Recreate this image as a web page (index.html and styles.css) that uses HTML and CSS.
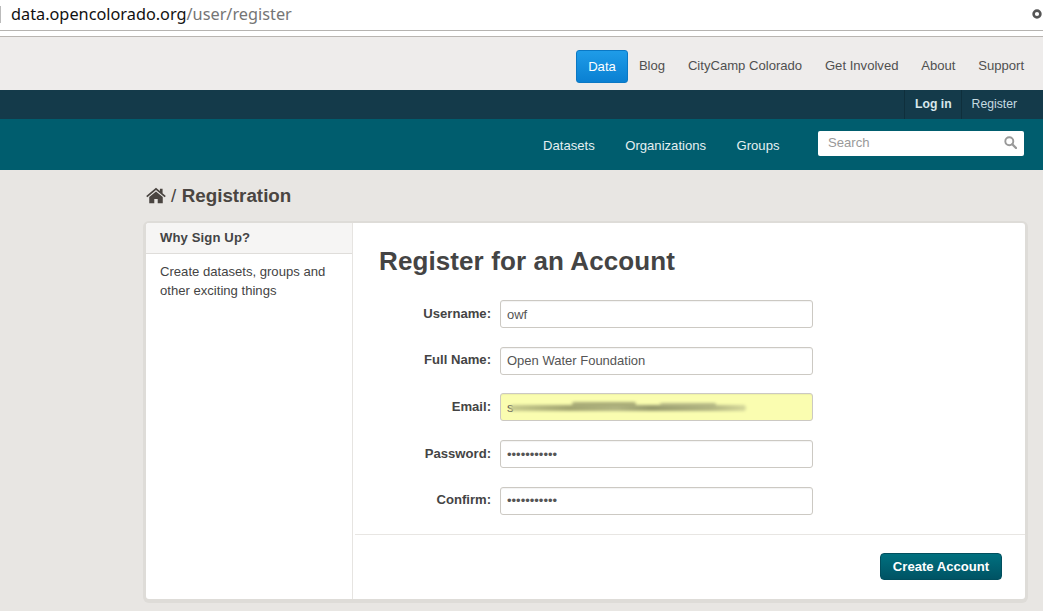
FILE: index.html
```html
<!DOCTYPE html>
<html lang="en">
<head>
<meta charset="utf-8">
<title>Registration</title>
<link rel="stylesheet" href="styles.css">
</head>
<body>
<div class="addressbar">
  <span class="url"><span class="host">data.opencolorado.org</span>/user/register</span>
  <svg class="gear" width="10" height="10" viewBox="0 0 10 10"><circle cx="5" cy="5" r="3.4" fill="none" stroke="#555" stroke-width="2.6"/></svg>
</div>
<div class="chromegap"></div>
<nav class="sitenav">
  <a class="sitelink active">Data</a>
  <a class="sitelink">Blog</a>
  <a class="sitelink">CityCamp Colorado</a>
  <a class="sitelink">Get Involved</a>
  <a class="sitelink">About</a>
  <a class="sitelink">Support</a>
</nav>
<div class="accountbar">
  <a class="acct login">Log in</a>
  <a class="acct register">Register</a>
</div>
<header class="mainnav">
  <a class="navlink">Datasets</a>
  <a class="navlink">Organizations</a>
  <a class="navlink">Groups</a>
  <div class="searchbox">
    <span class="searchtext">Search</span>
    <svg width="13" height="13" viewBox="0 0 13 13"><circle cx="5.3" cy="5.3" r="4" fill="none" stroke="#999" stroke-width="1.9"/><path d="M8.3 8.3L12 12" stroke="#999" stroke-width="2.3" stroke-linecap="round"/></svg>
  </div>
</header>
<main class="content">
  <div class="crumbs">
    <svg class="home" width="20" height="17" viewBox="0 0 21 17"><path fill="#4a4541" d="M10.5 0.4L0.2 8.9l1.2 1.4 9.1-7.5 9.1 7.5 1.2-1.4-3.4-2.8V1.3h-2.8v2.5zM3.4 10.2v6.5h5.3v-4.4h3.6v4.4h5.3v-6.5l-7.1-5.8z"/></svg>
    <span class="sep">/</span>
    <span class="crumb">Registration</span>
  </div>
  <div class="panel">
    <aside class="side">
      <h2 class="sidehead">Why Sign Up?</h2>
      <p class="sidetext">Create datasets, groups and other exciting things</p>
    </aside>
    <section class="primary">
      <h1 class="title">Register for an Account</h1>
      <form class="form">
        <div class="row"><label class="lbl">Username:</label><input class="field" type="text" value="owf"></div>
        <div class="row"><label class="lbl">Full Name:</label><input class="field" type="text" value="Open Water Foundation"></div>
        <div class="row"><label class="lbl">Email:</label>
          <div class="fieldwrap"><input class="field filled" type="text" value="s"><div class="smear"></div></div>
        </div>
        <div class="row"><label class="lbl">Password:</label><input class="field" type="password" value="aaaaaaaaaaa"></div>
        <div class="row"><label class="lbl">Confirm:</label><input class="field" type="password" value="aaaaaaaaaaa"></div>
        <div class="actions"><button class="submit" type="button">Create Account</button></div>
      </form>
    </section>
  </div>
</main>
</body>
</html>
```
FILE: styles.css
```css
* { box-sizing: border-box; }
html, body { margin: 0; padding: 0; height: 611px; overflow: hidden; }
body { background: #e8e6e3; font-family: "Liberation Sans", Arial, sans-serif; font-size: 13.1px; color: #444; }

.addressbar { height: 31px; background: #fff; border-bottom: 1px solid #b5b3b0; display: flex; align-items: center; justify-content: space-between; padding: 0 0 3px 11px; position: relative; }
.addressbar::before { content: ""; position: absolute; left: 0; top: 6px; width: 1px; height: 17px; background: #bbb; }
.url { font-family: "Noto Sans", sans-serif; font-size: 16.3px; color: #757575; white-space: nowrap; }
.host { color: #111; }
.gear { margin-right: 1px; }
.chromegap { height: 6px; background: #fff; border-bottom: 1px solid #b9b5b1; }

.sitenav { height: 53px; background: #eeeceb; display: flex; justify-content: flex-end; align-items: center; padding: 3px 7.5px 0 0; }
.sitelink { padding: 0 11.4px; font-size: 13.1px; color: #505050; line-height: 33px; white-space: nowrap; }
.sitelink.active { background: linear-gradient(#1f9ce8, #0a80d2); color: #fff; border: 1px solid #0a78c4; border-radius: 3px; width: 52px; padding: 0 0 0 1px; text-align: center; line-height: 31px; position: relative; top: 1px; }

.accountbar { height: 29px; background: #143a4a; display: flex; justify-content: flex-end; padding-right: 16px; }
.acct { font-size: 12.2px; line-height: 29px; color: #c6dbe1; padding: 0 10px; border-left: 1px solid #0f2f3c; }
.acct.login { font-weight: bold; color: #d8e8ec; padding: 0 9px 0 10px; }

.mainnav { height: 51px; background: #005d6e; display: flex; justify-content: flex-end; align-items: center; padding: 0 19px 0 0; }
.navlink { color: #e4f0f2; font-size: 13.1px; margin: 2px 30.5px 0 0; }
.navlink:nth-of-type(3) { margin-right: 38.5px; }
.searchbox { width: 206px; height: 25px; background: #fff; border-radius: 2px; display: flex; justify-content: space-between; align-items: center; padding: 0 7px 0 10px; margin-top: -3px; }
.searchbox svg { margin-top: -1px; }
.searchtext { color: #999; font-size: 13.1px; margin-top: -2px; }

.content { padding: 0 17px 0 146px; }
.crumbs { height: 53px; display: flex; align-items: center; font-size: 18.8px; color: #4a4541; padding-bottom: 2px; }
.home { margin-right: 5px; margin-top: -1px; }
.sep { font-weight: normal; margin-right: 5.5px; }
.crumb { font-weight: bold; }

.panel { width: 879px; height: 376px; background: #fff; border-radius: 3px; box-shadow: 0 1px 0 3px #dedcd8; display: flex; }
.side { width: 207px; border-right: 1px solid #e6e4e1; flex: none; }
.sidehead { margin: 0; height: 31px; padding: 0 14px; font-size: 13.1px; line-height: 30px; font-weight: bold; background: #f6f5f4; border-bottom: 1px solid #dfddda; border-radius: 3px 0 0 0; color: #444; letter-spacing: 0.12px; }
.sidetext { margin: 8px 14px 0; line-height: 19px; font-size: 13.1px; color: #444; }

.primary { flex: 1; }
.title { margin: 0; padding: 23px 0 0 26px; height: 77px; font-size: 26px; line-height: 31px; font-weight: bold; color: #444; letter-spacing: 0.1px; }
.form { margin: 0; }
.row { display: flex; align-items: center; height: 28px; margin-bottom: 18.72px; }
.lbl { width: 138px; text-align: right; font-weight: bold; font-size: 13.1px; color: #444; margin-right: 9px; margin-top: -2px; }
.field { width: 313px; height: 28px; border: 1px solid #ccc9c3; border-radius: 3px; padding: 0 6px; font: 13px "Liberation Sans", Arial, sans-serif; color: #555; background: #fff; box-shadow: inset 0 1px 1px rgba(0,0,0,.05); outline: none; }
.field.filled { background: #fafdb0; }
.fieldwrap { position: relative; width: 313px; height: 28px; }
.smear { position: absolute; left: 10px; top: 12px; width: 236px; height: 6px; border-radius: 3px; background: linear-gradient(90deg, #c9cc8e 0%, #a2a571 25%, #b2b582 45%, #979b6d 60%, #b2b582 85%, #d5d89a 100%); filter: blur(1.4px); }
.smear::before { content: ""; position: absolute; left: 62px; top: -3px; width: 64px; height: 4px; border-radius: 2px; background: #a9ac78; }
.smear::after { content: ""; position: absolute; left: 150px; top: -2px; width: 56px; height: 3px; border-radius: 2px; background: #b4b784; }
.actions { border-top: 1px solid #e8e6e3; height: 65px; margin-left: 2px; padding: 18px 23px 0 0; display: flex; justify-content: flex-end; align-items: flex-start; }
.submit { width: 122px; height: 27px; border: 1px solid #014f5e; border-radius: 4px; background: linear-gradient(#00707f, #005364); color: #fff; font: bold 13.1px "Liberation Sans", Arial, sans-serif; padding: 0; }
```
